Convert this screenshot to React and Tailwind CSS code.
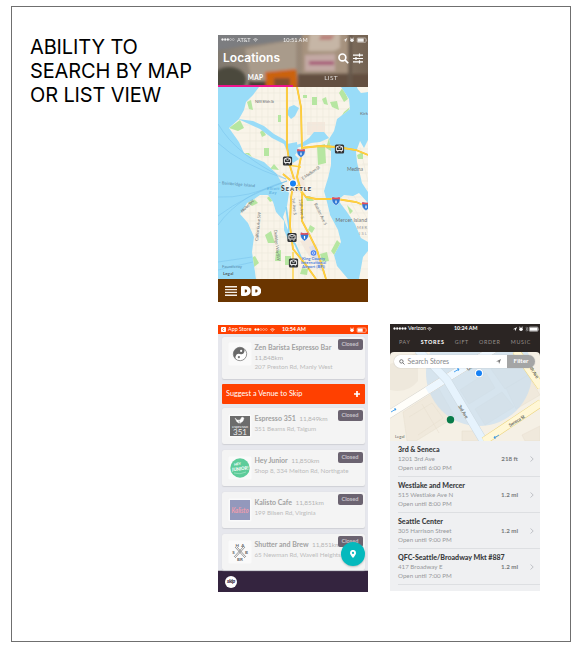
import React from "react";

const lato = "font-['Lato','Liberation_Sans',sans-serif]";

function Wifi({ className }) {
  return (
    <svg viewBox="0 0 12 9" className={className} fill="none" stroke="currentColor" strokeWidth="1.7">
      <path d="M1 3.4Q6-.8 11 3.4M3 5.5Q6 3 9 5.5" />
      <circle cx="6" cy="7.5" r="1" fill="currentColor" stroke="none" />
    </svg>
  );
}

function Signal({ on }) {
  return (
    <svg viewBox="0 0 14 3" className="h-[3px] w-[14px] shrink-0" fill="none" stroke="currentColor" strokeWidth=".4">
      {[0, 1, 2, 3, 4].map((i) => (
        <circle key={i} cx={1.5 + i * 2.7} cy="1.5" r="1" fill={i < on ? "currentColor" : "none"} />
      ))}
    </svg>
  );
}

function StatusIcons({ arrow, bluetooth, level = 6 }) {
  return (
    <svg viewBox="0 0 28 8" className="h-[8px] w-[28px] shrink-0" fill="currentColor">
      {arrow && <path d={bluetooth ? "M1 4.2 5 2 3.3 6.3 3 4.3z" : "M3.5 4.2 7.2 2 5.6 6.2 5.2 4.3z"} />}
      <circle cx={bluetooth ? 9 : 12} cy="4.2" r="1.8" />
      <path d={bluetooth ? "M7 2.2h1.3M9.7 2.2H11" : "M10 2.2h1.3M12.7 2.2H14"} stroke="currentColor" strokeWidth=".7" />
      {bluetooth && <path d="M13.6 2.8 16 5.2 14.8 6.2V2L16 3.1l-2.4 2.2" fill="none" stroke="#999" strokeWidth=".6" />}
      <rect x="17.2" y="2" width="8.8" height="4.3" rx=".8" fill="none" stroke="currentColor" strokeWidth=".5" />
      <rect x="17.7" y="2.5" width={level} height="3.3" rx=".3" />
      <path d="M26.6 3.3q1 .9 0 1.8z" />
    </svg>
  );
}

const minorX = [32, 38, 44, 50, 56, 62, 68, 75, 81, 87, 93, 99, 105, 111, 117];
const minorY = [6, 14, 22, 30, 38, 46, 54, 62, 70, 78, 86, 94, 102, 110, 118, 126, 134, 142, 150, 158, 166, 174, 182];

function Shield({ x, y }) {
  return (
    <g transform={`translate(${x} ${y})`}>
      <path d="M-3.6-3.9Q0-2.5 3.6-3.9 5.4 1.6 0 4.5-5.4 1.6-3.6-3.9z" fill="#2f78d4" stroke="#e8eef8" strokeWidth=".5" />
      <path d="M-3.6-3.9Q0-2.5 3.6-3.9L4.1-1.7h-8.2z" fill="#e5505a" />
      <path d="M0-.6v2.9" stroke="#fff" strokeWidth="1.2" />
    </g>
  );
}

function Transit({ x, y }) {
  return (
    <g transform={`translate(${x} ${y})`}>
      <rect x="-4.6" y="-4.5" width="9.2" height="9" rx="1.5" fill="#303234" />
      <path d="M-3.1-2.2Q0-4 3.1-2.2V1.5H-3.1z" fill="none" stroke="#fff" strokeWidth=".9" />
      <path d="M-2.3-2 0-.3 2.3-2M-2.4 2.7h1.2M1.2 2.7h1.2" fill="none" stroke="#fff" strokeWidth=".8" />
    </g>
  );
}

function SeattleMap() {
  return (
    <svg viewBox="0 0 150 192" className="block h-[192px] w-[150px]" fontFamily="Lato, 'Liberation Sans', sans-serif">
      <defs>
        <clipPath id="land">
          <path d="M41 0 35 8 28 15 26 23 21 32 11 41 21 55 26 66 36 71 46 75 58 86 64 96 71 106 69 119 65 130 70 143 70 153 66 143 66 134 58 125 55 115 50 108 42 108 35 113 29 116 25 123 22 127 30 136 36 150 34 165 36 178 38 192H130L119 179 116 168 123 155 120 143 112 128 109 115 106 104 110 91 113 78 113 61 111 52 116 44 119 32 132 22 131 12 123 0z" />
          <path d="M138 0H150V5L143 6z" />
          <path d="M150 53 146 61 142 54 138 65 139 75 141 83 144 96 150 105z" />
          <path d="M120 113 126 108 135 109 141 106 150 116V155L143 151 137 137 129 125z" />
          <path d="M145 170 150 164V192H141z" />
        </clipPath>
      </defs>
      <rect width="150" height="192" fill="#99dcf8" />
      <g clipPath="url(#land)">
        <rect width="150" height="192" fill="#f9f4e9" />
        <path d="M89 35h18v13H89zM71 88l14 2 3 14-13 2zM82 154l12-2 9 25-12-8z" fill="#f4e8dc" />
        <path d="M91 160l7-3 9 28-5-2z" fill="#dddce6" />
        <g stroke="#eee9de" strokeWidth=".7" fill="none">
          {minorX.map((x) => <path key={x} d={`M${x} 0V192`} />)}
          {minorY.map((y) => <path key={y} d={`M10 ${y}H150`} />)}
          <path d="M130 110l20 36M136 109l14 24M142 60l8 35M144 77h6" />
        </g>
        <g fill="#b6e6a1">
          <path d="M11 41 22 33 26 41 20 44zM29 15l4-2 2 10-4-1zM99 59l8-2 1 19-8 2zM94 10h5v8h-5zM112 15l7-1 2 9-7-3zM42 45l3-2 3 5-4 2zM26 66l5 0 3 4zM52 82l4-5 5 6zM125 0l5 12-4 3-5-9zM126 25l6-5-5 11-4-1zM60 28h3v7h-3zM104 12l4-2 2 8-4-1zM46 61h5v8h-5zM85 8h4v3h-4zM111 51l3 5-1 8-5-3z" />
          <path d="M31 172l6-3 4 7-5 4zM47 148l6-4 4 12h-7zM58 164l5-1v11h-6zM67 169h6v9h-6zM87 110l5-1 4 5h-7zM119 153l4 4-6 12-4-5zM92 138l5 3-3 5-4-3zM49 111l5-4 2 6-4 2zM30 116l6-4 4 4-6 3zM84 181l6 1-1 6-7-1zM139 68l6-3v7h-5zM129 118l6 6-3 3zM119 104l6 4-4 3zM102 167l7-2 2 9-7 1z" />
        </g>
      </g>
      <g fill="#99dcf8">
        <path d="M20 32 35 34 46 39 56 47 65 52 70 56 71 63 68 62 66 57 54 51 42 42 31 37z" />
        <path d="M69 57 79 55 80 64 77 68 81 72 75 76 71 70z" />
        <path d="M71 20 76 18 81 21 77 29 73 32 69 27zM76 59l8-3 7-5 5-6 10 0 5 6-9 4-9 1-7 3-8 2z" />
        <path d="M133 0l6 0 1 5-5 5z" />
      </g>
      <path d="M68 120 71 140 70 150 77 157 82 168 86 177" fill="none" stroke="#8bd5f5" strokeWidth="1.8" />
      <g fill="none" stroke="#76c0ea" strokeWidth=".5">
        <path d="M0 37Q19 69 68 92M0 56Q22 77 68 92M0 110Q27 112 69 94M0 129Q28 108 69 94M0 138Q22 107 69 94M0 175l34-5M0 183l35-8" />
      </g>
      <g fill="none" stroke="#f3b93a" strokeWidth="1.8">
        <path d="M69 0V60L72 79 76 92 73 111 72 139 75 162 88 178 98 192M79 0 83 20 84 65 79 90 84 107 84 134 92 149 99 163 108 192M83 61 102 59 119 60 138 63 150 68M65 87 78 98 88 110 98 112 119 112 138 115 150 120" />
      </g>
      <g fill="none" stroke="#ffd23e" strokeWidth="1.3">
        <path d="M69 0V60L72 79 76 92 73 111 72 139 75 162 88 178 98 192M79 0 83 20 84 65 79 90 84 107 84 134 92 149 99 163 108 192M83 61 102 59 119 60 138 63 150 68M65 87 78 98 88 110 98 112 119 112 138 115 150 120M75 165V192M70 78l13 2" />
      </g>
      <Transit x="121.5" y="62" />
      <Transit x="69.5" y="74" />
      <Transit x="74" y="150.5" />
      <Transit x="75.5" y="176" />
      <Shield x="83" y="66" />
      <Shield x="86.5" y="149.5" />
      <Shield x="118" y="114" />
      <Shield x="148" y="119" />
      <g fill="#717475" fontSize="4.2">
        <text x="37" y="16" textLength="19">NW 85th St</text>
        <text x="142" y="28" textLength="8" lengthAdjust="spacingAndGlyphs">Kirk</text>
        <text x="129" y="84" textLength="16" fontSize="5">Medina</text>
        <text x="117.5" y="134.5" textLength="31.5" fontSize="5">Mercer Island</text>
        <text x="139" y="142" textLength="10" fill="#999">MER</text>
        <text x="141" y="148" textLength="8" fill="#999">ISL</text>
        <text transform="translate(85 93) rotate(-35)" textLength="21">E Madison St</text>
        <text transform="translate(40 154) rotate(-84)" textLength="29">California Ave SW</text>
        <text transform="translate(56 143) rotate(84)" textLength="31">Delridge Way SW</text>
        <text transform="translate(24 126) rotate(-43)" textLength="17">Alki Ave SW</text>
        <text transform="translate(74 111) rotate(84)">1st Ave S</text>
        <text transform="translate(81 112) rotate(84)">15th Ave S</text>
        <text transform="translate(96 117) rotate(64)">Rainier Ave S</text>
      </g>
      <g fill="#5586a6" fontSize="4.2">
        <text transform="translate(1 97) rotate(5)" textLength="36">- Bainbridge Island</text>
        <text x="49" y="102.5" fontStyle="italic" fill="#50a7d8" letterSpacing=".4">Elliott</text>
        <text x="51" y="107" fontStyle="italic" fill="#50a7d8" letterSpacing=".4">Bay</text>
        <text x="4" y="181" textLength="20">Fauntleroy</text>
      </g>
      <text x="5" y="188" fontSize="4.5" fill="#52616a" fontWeight="700">Legal</text>
      <g fontWeight="900" fill="#3d4142" stroke="#fff" strokeWidth=".8" paintOrder="stroke">
        <text x="63" y="104" fontSize="6.8" textLength="30"><tspan>S</tspan><tspan fontSize="5.8">EATTLE</tspan></text>
      </g>
      <circle cx="75" cy="96.5" r="4.2" fill="#fff" opacity=".9" />
      <circle cx="75" cy="96.5" r="3" fill="#1681f5" />
      <circle cx="95.5" cy="166" r="2.8" fill="#4c82f0" />
      <circle cx="95.5" cy="166" r="1.2" fill="none" stroke="#fff" strokeWidth=".6" />
      <g fontSize="4.2" fill="#4c7edb" textAnchor="middle" fontWeight="700">
        <text x="95.5" y="173" textLength="23">King County</text>
        <text x="95.5" y="177" textLength="25">International</text>
        <text x="95.5" y="181" textLength="23">Airport (BFI)</text>
      </g>
    </svg>
  );
}

function HeaderPhoto() {
  return (
    <svg viewBox="0 0 150 52" className="absolute inset-0 h-full w-full">
      <defs>
        <filter id="soft" x="-20%" y="-20%" width="140%" height="140%"><feGaussianBlur stdDeviation="1.8" /></filter>
        <linearGradient id="wall" x2="1"><stop stopColor="#817a70" /><stop offset=".45" stopColor="#a09080" /><stop offset="1" stopColor="#736252" /></linearGradient>
      </defs>
      <rect width="150" height="52" fill="url(#wall)" />
      <g filter="url(#soft)">
        <path d="M-3-3h88v7L25 11-3 16z" fill="#7b7d80" />
        <path d="M27 14 78 5v46H35z" fill="#a99b8b" />
        <ellipse cx="11" cy="45" rx="17" ry="13" fill="#4b4a3d" />
        <path d="M31 46h17v13H30z" fill="#493c34" />
        <path d="M47 37 78 34 80 57H71V43H56v11h-8z" fill="#cb6210" />
        <path d="M56 43h16v13H56z" fill="#80502f" />
        <path d="M84-2h46v40H84z" fill="#a6927e" />
        <path d="M92-2h30v15l-6 3H90z" fill="#c6b6a6" />
        <path d="M103 0h14l-4 5h-12z" fill="#b9827b" />
        <path d="M87 20l30-1v17H87z" fill="#c3a9a4" />
        <path d="M91 28h25" stroke="#a95f7a" strokeWidth="4" />
        <path d="M80 39h74v18H79z" fill="#635040" />
        <path d="M131-2h3v54h-4z" fill="#66594c" />
      </g>
    </svg>
  );
}

function MapPhone() {
  return (
    <section className="flex h-[267px] w-[150px] flex-col overflow-hidden bg-[#6a3500] font-['Inter','Liberation_Sans',sans-serif]">
      <header className="relative h-[52px] shrink-0 text-white">
        <HeaderPhoto />
        <div className="relative flex h-full flex-col">
          <div className={`flex h-[9px] items-center pl-[3px] text-[5.6px] leading-none opacity-90 ${lato}`}>
            <div className="flex w-[62px] items-center gap-[2px]"><Signal on={3} /><span>AT&amp;T</span><Wifi className="h-[4px] w-[5px]" /></div>
            <span className="w-[57px] whitespace-nowrap">10:51 AM</span>
            <StatusIcons arrow />
          </div>
          <div className="flex h-[28px] items-center pl-[5px]">
            <h2 className="w-[115px] text-[12px] font-semibold leading-none tracking-[.05px]">Locations</h2>
            <svg viewBox="0 0 10 10" className="h-[11px] w-[11px]" fill="none" stroke="currentColor" strokeWidth="1.5"><circle cx="4" cy="4" r="3.1" /><path d="m6.3 6.3 3 3" /></svg>
            <svg viewBox="0 0 10 11" className="ml-[4px] h-[11px] w-[10px]" fill="none" stroke="currentColor" strokeWidth="1.2"><path d="M0 2.2h10M0 5.5h10M0 8.8h10M6.5.6v3.2M3 4v3.1M6.5 7.2v3.2" /></svg>
          </div>
          <nav className={`flex h-[15px] text-center text-[6.5px] leading-[11px] tracking-[.3px] ${lato}`}>
            <div className="w-1/2 border-b-2 border-[#ee148b] font-bold">MAP</div><div className="w-1/2 pl-px opacity-80">LIST</div>
          </nav>
        </div>
      </header>
      <SeattleMap />
      <footer className="flex h-[23px] items-center gap-[4px] pl-[7px]">
        <svg viewBox="0 0 12 10" className="h-[10px] w-[12px]" stroke="#f5eee6" strokeWidth="1.4"><path d="M0 .8h12M0 3.6h12M0 6.4h12M0 9.2h12" /></svg>
        <svg viewBox="0 0 20 10" className="h-[10px] w-[20px]" fill="#fff" fillRule="evenodd"><path d="M1 0h3.7a5 5 0 0 1 0 10H1Q0 10 0 9V1Q0 0 1 0zM3.8 3.6v2.8h.9a1.4 1.4 0 0 0 0-2.8zM11.6 0h3.6a5 5 0 0 1 0 10h-3.6q-1 0-1-1V1q0-1 1-1zM14.3 3.6v2.8h.9a1.4 1.4 0 0 0 0-2.8z" /></svg>
      </footer>
    </section>
  );
}

function Logo({ kind }) {
  return (
    <svg viewBox="0 0 24 24" className="h-[24px] w-[24px] shrink-0" fontFamily="Lato, sans-serif">
      <rect width="24" height="24" rx="1.5" fill="#fafafa" stroke="#eee" strokeWidth=".5" />
      {kind === "yin" && (
        <g transform="rotate(20 12 12)">
          <circle cx="12" cy="12" r="6.7" fill="#fff" stroke="#777" strokeWidth=".7" />
          <path d="M12 5.3a3.35 3.35 0 0 1 0 6.7 3.35 3.35 0 0 0 0 6.7A6.7 6.7 0 0 1 12 5.3z" fill="#696969" />
          <circle cx="12" cy="8.7" r="1.1" fill="#fff" /><circle cx="12" cy="15.3" r="1.1" fill="#777" />
        </g>
      )}
      {kind === "espresso" && (
        <g>
          <rect x="2" y="2" width="20" height="20" fill="#6c6c6c" />
          <path d="M7 4q2 3 5 2l2-3 2 1-1 3q-2 3-6 1zM11 7l-1 2h3" fill="#fff" stroke="#fff" strokeWidth=".4" />
          <text x="12" y="13.5" fill="#eee" fontSize="4.5" textAnchor="middle" textLength="16">espresso</text>
          <text x="12" y="21" fill="#eee" fontSize="8" textAnchor="middle">351</text>
        </g>
      )}
      {kind === "junior" && (
        <g>
          <circle cx="12" cy="12" r="9.7" fill="#5dcc9a" />
          <g transform="rotate(-7 12 12)" fill="#fff" textAnchor="middle" fontWeight="900"><text x="10" y="9" fontSize="3.5">HEY</text><text x="12" y="14.5" fontSize="5" textLength="17" lengthAdjust="spacingAndGlyphs">JUNIOR!</text></g>
          <path d="M6 17q6 2 12-1" fill="none" stroke="#b4e9ce" strokeWidth=".6" />
        </g>
      )}
      {kind === "kalisto" && (
        <g><rect x="2" y="2" width="20" height="20" fill="#9398bc" /><text x="12" y="15" fill="#ef9cac" fontSize="7.5" fontStyle="italic" fontWeight="700" textAnchor="middle" textLength="17" lengthAdjust="spacingAndGlyphs">Kalisto</text></g>
      )}
      {kind === "shutter" && (
        <g stroke="#747474" strokeWidth=".7" fill="none">
          <path d="m7 7 10 11M17 7 7 18M9 7l9 10M15 7 6 17" />
          <g fill="#666" stroke="none" fontSize="4.5" fontWeight="700" textAnchor="middle"><text x="12" y="6.5" textLength="9">HA</text><text x="5.5" y="14">S</text><text x="18.5" y="14">B</text><text x="12" y="21">BR</text></g>
        </g>
      )}
    </svg>
  );
}

function Venue({ name, km, address, logo, tall }) {
  return (
    <article className={`relative flex rounded-[2px] bg-[#f4f4f4] pl-[6.5px] shadow-[0_.5px_1px_#cfd0d5] ${tall ? "h-[42px] pt-[5px]" : "h-[36px] pt-[6px]"}`}>
      <Logo kind={logo} />
      <div className={`ml-[2.5px] whitespace-nowrap text-[7px] text-[#b5b5b5] ${tall ? "mt-px leading-[9.7px]" : "leading-[9.5px]"}`}>
        <div><b className="text-[#a2a2a2]">{name}</b>{!tall && <span className="ml-[3.5px] text-[6.5px] tracking-[-.1px]">{km}</span>}</div>
        {tall && <div className="text-[6.5px] tracking-[-.05px]">{km}</div>}
        <div className="text-[6.3px] tracking-[-.03px] text-[#bcbcbc]">{address}</div>
      </div>
      <span className="absolute right-[2px] top-[2px] h-[11px] w-[25px] rounded-[2px] bg-[#6b6370] text-center text-[5.7px] font-bold leading-[10.5px] text-[#c8c3ca]">Closed</span>
    </article>
  );
}

function VenuePhone() {
  return (
    <section className={`relative flex h-[267px] w-[150px] flex-col overflow-hidden bg-[#e6e7ed] ${lato}`}>
      <header className="flex h-[9px] shrink-0 items-center bg-[#ff4000] pl-[3px] text-[6px] leading-none text-white">
        <div className="flex w-[61px] items-center gap-[2px] whitespace-nowrap">
          <svg viewBox="0 0 5 5" className="h-[5px] w-[5px] shrink-0"><rect width="5" height="5" rx=".8" fill="#fff" /><path d="M3 1 1.7 2.5 3 4" fill="none" stroke="#ff4000" strokeWidth=".7" /></svg>
          <span className="text-[5.4px]">App Store</span><Signal on={2} /><Wifi className="h-[4px] w-[5px] shrink-0" />
        </div>
        <b className="w-[58px] whitespace-nowrap text-[5.4px]">10:54 AM</b><StatusIcons level={5} />
      </header>
      <div className="flex flex-col px-[3.5px] pt-[3px]">
        <Venue tall name="Zen Barista Espresso Bar" km="11,848km" address="207 Preston Rd, Manly West" logo="yin" />
        <div className="mb-[4px] mt-[5px] flex h-[20px] items-center justify-between rounded-[1px] bg-[#ff4000] px-[4.5px] text-[7.3px] text-white">
          <span>Suggest a Venue to Skip</span>
          <svg viewBox="0 0 6 6" className="h-[6px] w-[6px]" stroke="white" strokeWidth="1.7"><path d="M0 3h6M3 0v6" /></svg>
        </div>
        <div className="flex flex-col gap-[6px]">
          <Venue name="Espresso 351" km="11,849km" address="351 Beams Rd, Taigum" logo="espresso" />
          <Venue name="Hey Junior" km="11,850km" address="Shop 8, 334 Melton Rd, Northgate" logo="junior" />
          <Venue name="Kalisto Cafe" km="11,851km" address="199 Bilsen Rd, Virginia" logo="kalisto" />
          <Venue name="Shutter and Brew" km="11,851km" address="65 Newman Rd, Wavell Heights" logo="shutter" />
        </div>
      </div>
      <footer className="mt-auto flex h-[21px] shrink-0 items-center bg-[#34243f] pl-[7px] shadow-[0_-1px_0_#b9b7bf]">
        <span className="h-[12px] w-[12px] rounded-full bg-white text-center text-[5.5px] font-black italic leading-[11px] tracking-[-.4px] text-[#34243f]">skip</span>
      </footer>
      <button className="absolute bottom-[26px] right-[3px] flex h-[24px] w-[24px] items-center justify-center rounded-full bg-[#05b9bd] shadow-[0_1px_2px_#9999]">
        <svg viewBox="0 0 6 8" className="h-[8px] w-[6px]"><path d="M3 8Q0 4.5 0 2.9a3 3 0 0 1 6 0Q6 4.5 3 8z" fill="white" /><circle cx="3" cy="2.9" r="1.1" fill="#05b9bd" /></svg>
      </button>
    </section>
  );
}

function StreetMap() {
  return (
    <svg viewBox="0 0 150 89" className="absolute inset-0 h-full w-full" fontFamily="Lato, 'Liberation Sans', sans-serif">
      <rect width="150" height="89" fill="#f5f0e5" />
      <path d="M0 12 28 0V29Q18 42 0 38z" fill="#eee8dc" />
      <g fill="#f0e9dc" stroke="#e6dece" strokeWidth=".5">
        <path d="M13 60 49 37 65 65 26 89H17zM19 65l23-14 11 15-25 17M32 52l17 29M70 38 96 21l9 15-26 16zM101 17l25-15 14 20-25 15zM85 57l27-17 12 15-29 18zM116 36l22-13 12 20-24 14z" />
        <path d="M72 79h14l4 10H72zM132 83l18-9v15h-15z" />
      </g>
      <circle cx="89" cy="21" r="53" fill="#c3ddf3" opacity=".64" />
      <path d="M-2 63 57 26 109-6" fill="none" stroke="#d8d5ce" strokeWidth="8" />
      <path d="M-2 63 57 26 109-6" fill="none" stroke="#fffefa" strokeWidth="7" />
      <path d="M37 38.5 57 26 109-6" fill="none" stroke="#edf7ff" strokeWidth="7" />
      <path d="M28-2 57 28 94 90" fill="none" stroke="#cdd9e1" strokeWidth="8.5" />
      <path d="M28-2 57 28 94 90" fill="none" stroke="#e6f3fd" strokeWidth="7.5" />
      <path d="M94 89 151 51M126-1l25 36" fill="none" stroke="#edd57d" strokeWidth="8" />
      <path d="M94 89 151 51M126-1l25 36" fill="none" stroke="#fff7d6" strokeWidth="7" />
      <g stroke="#268fea" strokeWidth=".8" fill="none"><path d="m64 20 5-3-2-.3m2 .3-1 2M1 60l5-3-2-.2m2 .2-1 1.6M104 86l5-3m-5 3h2m-2 0 1-2" /></g>
      <g fill="#686963" fontSize="4.6" fontWeight="700">
        <text transform="translate(68 54) rotate(59)" textLength="15">3rd Ave</text>
        <text transform="translate(120 75) rotate(-32)" textLength="18">Seneca St</text>
        <text transform="translate(78 19) rotate(-31)" textLength="25">University St</text>
        <text transform="translate(138.5 14) rotate(59)" textLength="15">4th Ave</text>
      </g>
      <text x="5" y="85.5" fill="#606060" fontSize="4.2">Legal</text>
      <circle cx="89" cy="21.2" r="4.6" fill="white" stroke="#bbc9d4" strokeWidth=".5" /><circle cx="89" cy="21.2" r="3" fill="#1681f5" />
      <circle cx="60.5" cy="67.7" r="3.7" fill="#087b49" />
    </svg>
  );
}

function Store({ name, address, hours, distance }) {
  return (
    <article className="ml-[8px] h-[36px] border-b border-[#dddfe2] pt-[4px] text-[6.2px] leading-[9px] text-[#96989b]">
      <h3 className="whitespace-nowrap text-[7.1px] font-black leading-[9px] tracking-[-.03px] text-[#3a3c3e]">{name}</h3>
      <div className="flex items-center justify-between pr-[6px]">
        <span>{address}</span>
        <span className="flex items-center gap-[12px] font-bold text-[#77797b]">{distance}
          <svg viewBox="0 0 4 6" className="h-[6px] w-[4px]" fill="none" stroke="#b5b8bc" strokeWidth=".8"><path d="m.5.5 2.7 2.5L.5 5.5" /></svg>
        </span>
      </div>
      <p className="-mt-[.5px]">{hours}</p>
    </article>
  );
}

function StorePhone() {
  return (
    <section className={`flex h-[267px] w-[150px] flex-col overflow-hidden bg-[#eff0f2] ${lato}`}>
      <header className="h-[28px] shrink-0 bg-[#2b2523] text-white">
        <div className="flex h-[9px] items-center pl-[3px] text-[6px] leading-none">
          <div className="flex w-[61px] items-center gap-[1px]"><Signal on={5} /><span className="text-[5.5px]">Verizon</span><Wifi className="h-[4px] w-[5px]" /></div>
          <b className="w-[58px] whitespace-nowrap text-[5.3px]">10:24 AM</b><StatusIcons arrow bluetooth level={7.8} />
        </div>
        <nav className="flex justify-between px-[9px] pt-[4px] text-[5.4px] leading-[10px] tracking-[.65px] text-[#958f8b]">
          <span>PAY</span><b className="text-white">STORES</b><span>GIFT</span><span>ORDER</span><span>MUSIC</span>
        </nav>
      </header>
      <div className="bg-[#2b2523]">
        <div className="relative h-[89px] overflow-hidden rounded-t-[4px]">
          <StreetMap />
          <div className="relative mr-[5px] ml-[4px] mt-[3px] flex h-[13px] overflow-hidden rounded-full shadow-[0_0_1px_#999]">
            <div className="flex grow items-center bg-white pl-[5px] pr-[6px]">
              <svg viewBox="0 0 7 7" className="mr-[2.5px] h-[6px] w-[6px]" fill="none" stroke="#555" strokeWidth=".9"><circle cx="2.8" cy="2.8" r="2" /><path d="m4.4 4.4 2 2" /></svg>
              <span className="grow text-[7px] leading-none text-[#85878a]">Search Stores</span>
              <svg viewBox="0 0 6 6" className="h-[5px] w-[5px]" fill="#777"><path d="M0 3 6 0 3.7 6 3 3z" /></svg>
            </div>
            <b className="w-[28px] bg-[#a4a5a5] text-center text-[6.3px] leading-[12px] text-white">Filter</b>
          </div>
        </div>
      </div>
      <Store name="3rd & Seneca" address="1201 3rd Ave" hours="Open until 6:00 PM" distance="218 ft" />
      <Store name="Westlake and Mercer" address="515 Westlake Ave N" hours="Open until 8:00 PM" distance="1.2 mi" />
      <Store name="Seattle Center" address="305 Harrison Street" hours="Open until 9:00 PM" distance="1.2 mi" />
      <Store name="QFC-Seattle/Broadway Mkt #887" address="417 Broadway E" hours="Open until 7:00 PM" distance="1.2 mi" />
    </section>
  );
}

export default function App() {
  return (
    <main className="h-[650px] w-[581px] overflow-hidden bg-white pl-[11px] pt-[6px]">
      <div className="flex h-[636px] w-[560px] border border-[#6f6f6f]">
        <h1 className="w-[206px] shrink-0 whitespace-nowrap pl-[18px] pt-[28px] font-['Inter','Liberation_Sans',sans-serif] text-[20px] leading-[24px] tracking-[-.13px] text-black">
          ABILITY TO<br />SEARCH BY MAP<br />OR LIST VIEW
        </h1>
        <div className="flex flex-col gap-[22px] pt-[28px]">
          <MapPhone />
          <div className="flex gap-[22px]">
            <div className="pt-[1px]"><VenuePhone /></div>
            <StorePhone />
          </div>
        </div>
      </div>
    </main>
  );
}
